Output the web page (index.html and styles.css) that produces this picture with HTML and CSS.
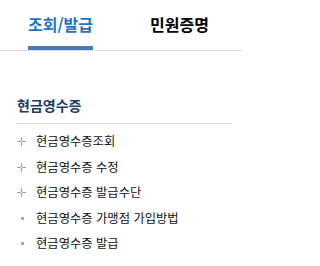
FILE: index.html
```html
<!DOCTYPE html>
<html lang="ko">
<head>
<meta charset="utf-8">
<link rel="stylesheet" href="styles.css">
</head>
<body>
<nav class="tabs">
  <a class="tab active"><span class="tab-label">조회/발급</span></a>
  <a class="tab"><span class="tab-label">민원증명</span></a>
</nav>
<section class="menu">
  <h2 class="menu-title">현금영수증</h2>
  <ul class="menu-list">
    <li class="item plus">현금영수증조회</li>
    <li class="item plus">현금영수증 수정</li>
    <li class="item plus">현금영수증 발급수단</li>
    <li class="item dot">현금영수증 가맹점 가입방법</li>
    <li class="item dot">현금영수증 발급</li>
  </ul>
</section>
</body>
</html>
```

FILE: styles.css
```css
html, body {
  margin: 0;
  padding: 0;
  background: #fff;
}
body {
  width: 242px;
  height: 266px;
  overflow: hidden;
  font-family: "Noto Sans CJK KR", "Noto Sans", sans-serif;
  color: #111;
}
.tabs {
  display: grid;
  grid-template-columns: 121px 121px;
  height: 50px;
  border-bottom: 1px solid #e0e0e0;
}
.tab {
  display: flex;
  justify-content: center;
  align-items: flex-end;
  text-decoration: none;
  color: #000;
}
.tab:nth-child(2) {
  padding-right: 4px;
}
.tab-label {
  display: block;
  font-size: 16px;
  font-weight: 700;
  line-height: 20px;
  padding-bottom: 12px;
  border-bottom: 4px solid transparent;
}
.tab.active .tab-label {
  color: #1f73c4;
  border-bottom-color: #4a7bb7;
}
.menu {
  padding: 44px 10px 0 17px;
}
.menu-title {
  margin: 0;
  font-size: 14px;
  font-weight: 700;
  color: #1a3a68;
  line-height: 20px;
  padding-bottom: 8px;
  border-bottom: 1px solid #d8d8d8;
}
.menu-list {
  list-style: none;
  margin: 0;
  padding: 5px 0 0 0;
}
.item {
  position: relative;
  height: 25.5px;
  line-height: 25.5px;
  padding-left: 19px;
  font-size: 12.3px;
  color: #111;
}
.item::before {
  content: "";
  position: absolute;
}
.item.plus::before {
  left: 0;
  top: 8px;
  width: 9px;
  height: 9px;
  background:
    linear-gradient(#999, #999) 4px 0 / 1px 3px no-repeat,
    linear-gradient(#999, #999) 4px 6px / 1px 3px no-repeat,
    linear-gradient(#999, #999) 0 4px / 3px 1px no-repeat,
    linear-gradient(#999, #999) 6px 4px / 3px 1px no-repeat,
    linear-gradient(#ccc, #ccc) 3px 3px / 3px 3px no-repeat;
}
.item.dot::before {
  left: 4px;
  top: 11px;
  width: 3px;
  height: 3px;
  background: #aaa;
}
```
